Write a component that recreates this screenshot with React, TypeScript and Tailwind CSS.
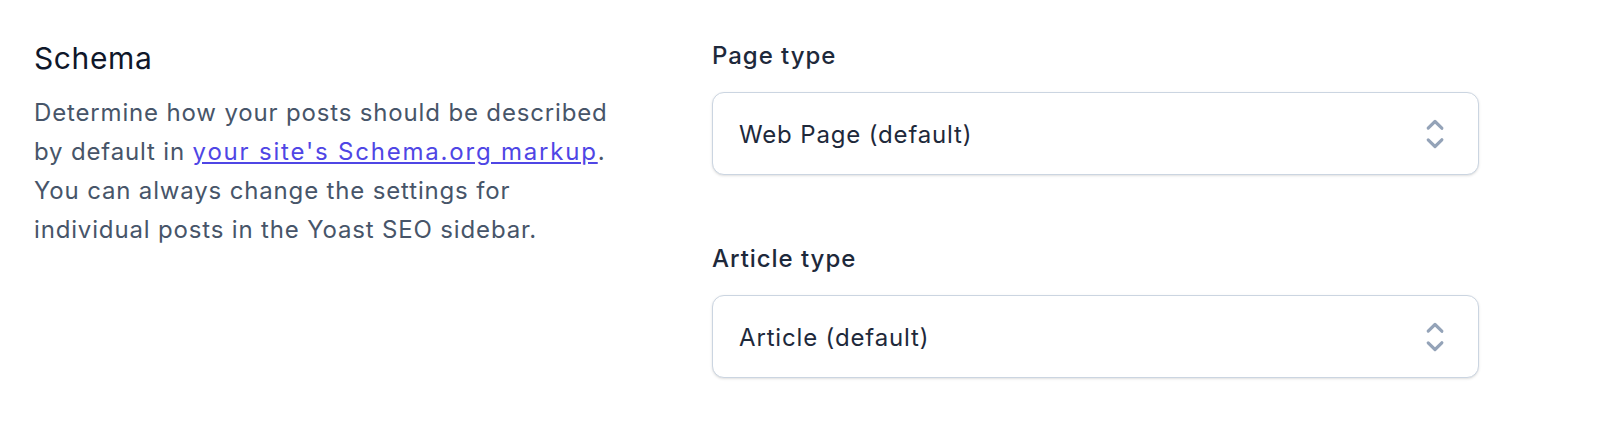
import React from 'react';

function ChevronUpDown({ className }: { className?: string }) {
  return (
    <svg viewBox="0 0 20 20" fill="currentColor" className={className} aria-hidden="true">
      <path
        fillRule="evenodd"
        d="M10.53 3.47a.75.75 0 0 0-1.06 0L6.22 6.72a.75.75 0 0 0 1.06 1.06L10 5.06l2.72 2.72a.75.75 0 1 0 1.06-1.06l-3.25-3.25Zm-4.31 9.81 3.25 3.25a.75.75 0 0 0 1.06 0l3.25-3.25a.75.75 0 1 0-1.06-1.06L10 14.94l-2.72-2.72a.75.75 0 0 0-1.06 1.06Z"
        clipRule="evenodd"
      />
    </svg>
  );
}

function SelectField({ label, value }: { label: string; value: string }) {
  return (
    <div>
      <label className="block text-[24px] leading-[32px] font-medium tracking-[0.04em] text-[#1e293b]">
        {label}
      </label>
      <button
        type="button"
        className="mt-[20px] w-full h-[83px] flex items-center justify-between pl-[26px] pr-[22px] bg-white border border-[#cbd5e1] rounded-[12px] shadow-sm text-left"
      >
        <span className="text-[24px] leading-[32px] tracking-[0.035em] text-[#1e293b] translate-y-[1px]">{value}</span>
        <ChevronUpDown className="w-[42px] h-[42px] text-[#94a3b8]" />
      </button>
    </div>
  );
}

export default function App() {
  return (
    <div
      className="w-[1602px] h-[432px] bg-white flex pt-[40px] pl-[34px]"
      style={{ fontFamily: 'Inter, "Noto Sans", sans-serif' }}
    >
      <div className="w-[585px] shrink-0">
        <h2 className="text-[30px] leading-[36px] font-normal tracking-[0.02em] text-[#0f172a]">Schema</h2>
        <p className="mt-[17px] text-[24px] leading-[39px] tracking-[0.035em] text-[#475569]">
          Determine how your posts should be described by default in{' '}
          <a href="#" className="text-[#4f46e5] underline underline-offset-2 tracking-[0.075em]">
            your site's Schema.org markup
          </a>
          . You can always change the settings for individual posts in the Yoast SEO sidebar.
        </p>
      </div>
      <div className="ml-[93px] w-[767px] flex flex-col gap-[68px]">
        <SelectField label="Page type" value="Web Page (default)" />
        <SelectField label="Article type" value="Article (default)" />
      </div>
    </div>
  );
}
